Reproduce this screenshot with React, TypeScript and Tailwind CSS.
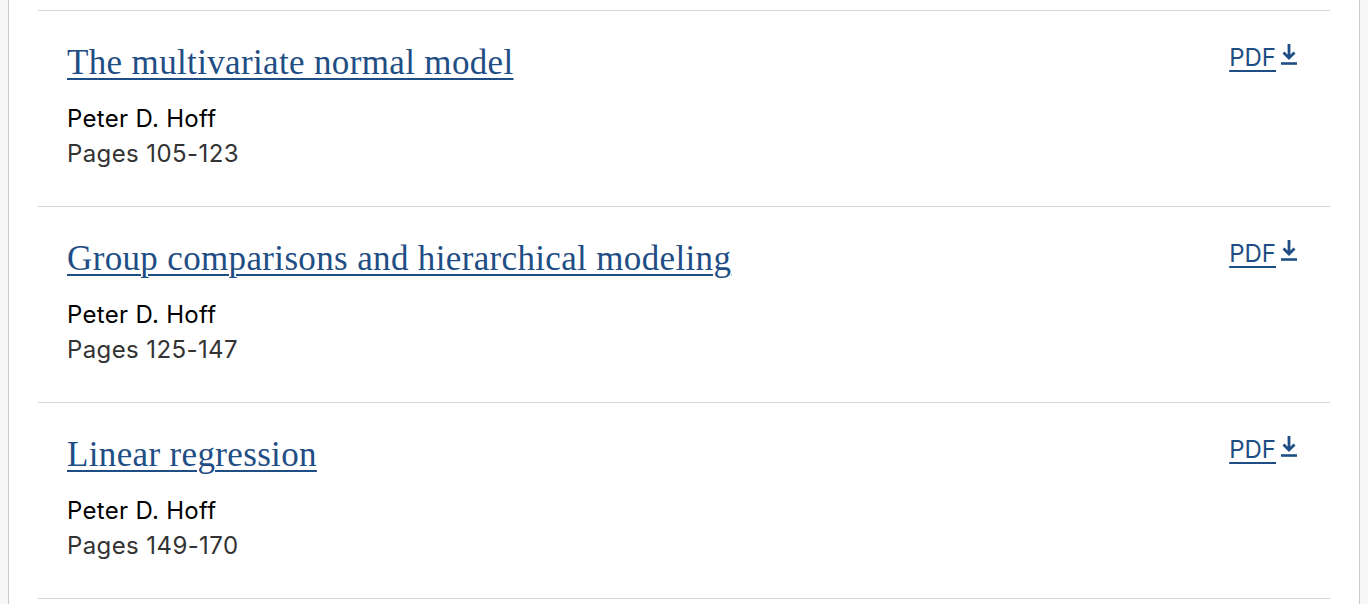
const chapters = [
  { title: "The multivariate normal model", author: "Peter D. Hoff", pages: "Pages 105-123" },
  { title: "Group comparisons and hierarchical modeling", author: "Peter D. Hoff", pages: "Pages 125-147" },
  { title: "Linear regression", author: "Peter D. Hoff", pages: "Pages 149-170" },
];

function DownloadIcon() {
  return (
    <svg width="16" height="21" viewBox="0 0 16 21" fill="none" className="ml-[5px] mt-[1px]">
      <path d="M8 0v13.5M2.5 8.5l5.5 5.5 5.5-5.5" stroke="#1f4e85" strokeWidth="2.8" />
      <path d="M0 19.5h16" stroke="#1f4e85" strokeWidth="2.6" />
    </svg>
  );
}

export default function App() {
  return (
    <div className="min-h-[604px] bg-[#f7f7f7] px-[8px]">
      <div className="min-h-[604px] border-x border-[#cccccc] bg-white px-[29px] pt-[10px]">
        <ul className="border-b border-[#d4d4d4]">
          {chapters.map((c) => (
            <li key={c.title} className="flex items-start justify-between border-t border-[#d4d4d4] pl-[29px] pr-[33px] pt-[32px] pb-[35px]">
              <div className="flex flex-col">
                <a
                  href="#"
                  className="font-['Georgia','Liberation_Serif',serif] text-[35px] leading-[40px] tracking-[0.35px] text-[#1f4e85] underline decoration-[2px] underline-offset-[4px]"
                >
                  {c.title}
                </a>
                <span className="mt-[18px] font-['Inter',sans-serif] text-[24px] leading-[35px] tracking-[0.3px] text-black">{c.author}</span>
                <span className="font-['Inter',sans-serif] text-[24px] leading-[35px] tracking-[0.4px] text-[#333333]">{c.pages}</span>
              </div>
              <a href="#" className="flex items-start font-['Inter',sans-serif] text-[24px] leading-[30px] text-[#1f4e85]">
                <span className="underline decoration-[2px] underline-offset-[4px]">PDF</span>
                <DownloadIcon />
              </a>
            </li>
          ))}
        </ul>
      </div>
    </div>
  );
}
